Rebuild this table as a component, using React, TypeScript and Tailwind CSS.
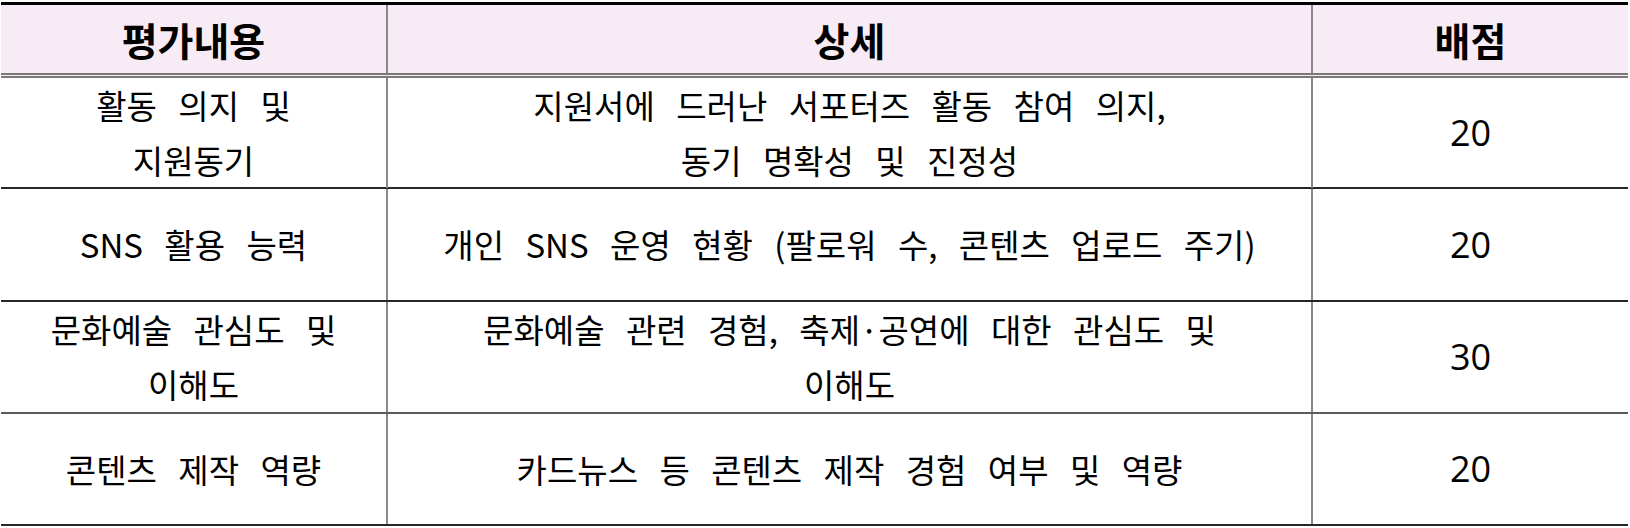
const rows = [
  { item: ["활동 의지 및", "지원동기"], detail: ["지원서에 드러난 서포터즈 활동 참여 의지,", "동기 명확성 및 진정성"], score: "20", h: "h-[111px]", line: "border-[#262626]" },
  { item: ["SNS 활용 능력"], detail: ["개인 SNS 운영 현황 (팔로워 수, 콘텐츠 업로드 주기)"], score: "20", h: "h-[113px]", line: "border-[#262626]" },
  { item: ["문화예술 관심도 및", "이해도"], detail: ["문화예술 관련 경험, 축제·공연에 대한 관심도 및", "이해도"], score: "30", h: "h-[112px]", line: "border-[#5a5a5a]" },
  { item: ["콘텐츠 제작 역량"], detail: ["카드뉴스 등 콘텐츠 제작 경험 여부 및 역량"], score: "20", h: "h-[112px]", line: "border-[#262626]" },
];

const Lines = ({ lines }: { lines: string[] }) => (
  <div className="flex flex-col items-center leading-[55px]">
    {lines.map((l) => (
      <span key={l}>{l}</span>
    ))}
  </div>
);

const App = () => {
  return (
    <div className="h-[528px] w-[1630px] bg-white pt-[2px] pl-[1px] font-['Noto_Sans_CJK_KR','Noto_Sans',sans-serif] text-black">
      <div className="w-[1627px] border-t-[3px] border-black">
        <div className="grid h-[73px] grid-cols-[387px_925px_315px] border-b-[5px] border-double border-[#7a7a7a] bg-[#f7ebf5] text-[39px] font-bold">
          <div className="flex items-center justify-center border-r-2 border-[#888]">평가내용</div>
          <div className="flex items-center justify-center border-r-2 border-[#888]">상세</div>
          <div className="flex items-center justify-center">배점</div>
        </div>
        {rows.map((r) => (
          <div
            key={r.score + r.item[0]}
            className={`grid grid-cols-[387px_925px_315px] border-b-2 text-[33px] [word-spacing:14px] ${r.h} ${r.line}`}
          >
            <div className="flex items-center justify-center border-r-2 border-[#888]">
              <Lines lines={r.item} />
            </div>
            <div className="flex items-center justify-center border-r-2 border-[#888]">
              <Lines lines={r.detail} />
            </div>
            <div className="flex items-center justify-center font-['Open_Sans',sans-serif] text-[36px]">{r.score}</div>
          </div>
        ))}
      </div>
    </div>
  );
};

export default App;
